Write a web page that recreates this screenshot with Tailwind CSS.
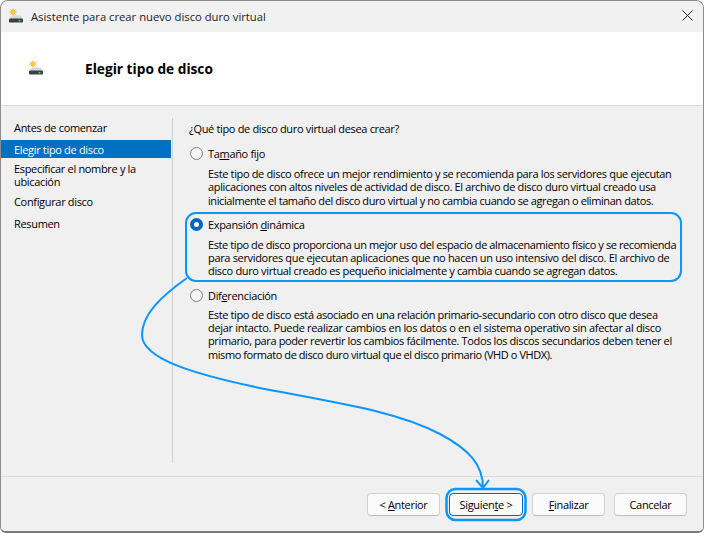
<!doctype html>
<html lang="es"><head><meta charset="utf-8"><script src="https://cdn.jsdelivr.net/npm/@tailwindcss/browser@4"></script></head>
<body class="m-0 bg-white">
<div class="relative w-[704px] h-[533px] overflow-hidden bg-white font-['Open_Sans','Liberation_Sans',sans-serif] text-[11px] tracking-[-0.33px] leading-[13px] text-black">
 <div class="flex flex-col h-full border border-[#8c8c8c] border-b-[2px] border-b-[#7a7a7a] rounded-t-[8px] rounded-b-[6px] overflow-hidden bg-[#f0f0f0]">
  <div class="h-[31px] shrink-0 flex items-center pl-[8px] pr-[10px] bg-[#f1f1f1]">
   <svg width="14" height="15" viewBox="0 0 14 15" class="shrink-0 -mt-[2px]"><g stroke="#f5a623" stroke-width="1"><path d="M4 .5v7M.5 4h7M1.500 1.500l5 5M6.500 1.500l-5 5"/></g><circle cx="4" cy="4" r="2" fill="#ffc83d"/><path d="M2.500 7.500h9l2 3.500H.5z" fill="#d5d8da"/><rect x="0" y="10.500" width="14" height="4" rx="1" fill="#3b3f44"/><rect x="9.500" y="12" width="2" height="1.500" fill="#3ddc5a"/></svg>
   <span class="ml-[8px] text-[11.25px] tracking-normal whitespace-nowrap text-[#222]">Asistente para crear nuevo disco duro virtual</span>
   <svg width="11" height="11" viewBox="0 0 11 11" class="ml-auto -mt-[2px]"><path d="M.5.5l10 10M10.500.5l-10 10" stroke="#222" stroke-width="1" fill="none"/></svg>
  </div>
  <div class="h-[74px] shrink-0 bg-white border-b border-b-[#d9d9d9] flex items-center pl-[28px]">
   <svg width="14" height="15" viewBox="0 0 14 15" class="shrink-0 -mt-[2px]"><g stroke="#f5a623" stroke-width="1"><path d="M4 .5v7M.5 4h7M1.500 1.500l5 5M6.500 1.500l-5 5"/></g><circle cx="4" cy="4" r="2" fill="#ffc83d"/><path d="M2.500 7.500h9l2 3.500H.5z" fill="#d5d8da"/><rect x="0" y="10.500" width="14" height="4" rx="1" fill="#3b3f44"/><rect x="9.500" y="12" width="2" height="1.500" fill="#3ddc5a"/></svg>
   <h1 class="ml-[42px] text-[13.7px] tracking-normal font-bold text-black whitespace-nowrap">Elegir tipo de disco</h1>
  </div>
  <div class="flex-1 flex bg-[#f0f0f0] border-b border-b-[#dcdcdc] pt-[12px] pb-[13px]">
   <nav class="w-[172px] shrink-0 border-r border-r-[#cfcfcf] pr-[1px]">
    <div class="h-[19px] pl-[13px] flex items-center">Antes de comenzar</div>
    <div class="h-[18px] mt-[3px] pl-[13px] flex items-center bg-[#0070c0] text-white">Elegir tipo de disco</div>
    <div class="mt-[4px] pl-[13px] leading-[13px]">Especificar el nombre y la<br>ubicación</div>
    <div class="mt-[6px] pl-[13px] h-[14px] flex items-center">Configurar disco</div>
    <div class="mt-[8px] pl-[13px] h-[14px] flex items-center">Resumen</div>
   </nav>
   <main class="flex-1 pl-[16px] pt-[4px]">
    <p class="whitespace-nowrap h-[15px]">¿Qué tipo de disco duro virtual desea crear?</p>
    <label class="mt-[9px] flex items-center h-[15px]"><span class="ml-[1px] w-[13px] h-[13px] rounded-full border border-[#7f7f7f] bg-[#f5f5f5] shrink-0"></span><span class="ml-[5px]">Ta<u>m</u>año fijo</span></label>
    <p class="mt-[6px] ml-[19px] whitespace-nowrap leading-[13.3px]"><span class="tracking-[-0.35px]">Este tipo de disco ofrece un mejor rendimiento y se recomienda para los servidores que ejecutan</span><br><span class="tracking-[-0.35px]">aplicaciones con altos niveles de actividad de disco. El archivo de disco duro virtual creado usa</span><br><span class="tracking-[-0.405px]">inicialmente el tamaño del disco duro virtual y no cambia cuando se agregan o eliminan datos.</span></p>
    <label class="mt-[10px] flex items-center h-[15px]"><span class="ml-[1px] w-[13px] h-[13px] rounded-full border-[4px] border-[#0067c0] bg-white shrink-0"></span><span class="ml-[5px]">Expansión <u>d</u>inámica</span></label>
    <p class="mt-[6px] ml-[19px] whitespace-nowrap leading-[13.3px]"><span class="tracking-[-0.41px]">Este tipo de disco proporciona un mejor uso del espacio de almacenamiento físico y se recomienda</span><br><span>para servidores que ejecutan aplicaciones que no hacen un uso intensivo del disco. El archivo de</span><br><span class="tracking-[-0.35px]">disco duro virtual creado es pequeño inicialmente y cambia cuando se agregan datos.</span></p>
    <label class="mt-[10px] flex items-center h-[15px]"><span class="ml-[1px] w-[13px] h-[13px] rounded-full border border-[#7f7f7f] bg-[#f5f5f5] shrink-0"></span><span class="ml-[5px]">Dif<u>e</u>renciación</span></label>
    <p class="mt-[5px] ml-[19px] whitespace-nowrap leading-[13.3px]"><span class="tracking-[-0.36px]">Este tipo de disco está asociado en una relación primario-secundario con otro disco que desea</span><br><span class="tracking-[-0.31px]">dejar intacto. Puede realizar cambios en los datos o en el sistema operativo sin afectar al disco</span><br><span class="tracking-[-0.37px]">primario, para poder revertir los cambios fácilmente. Todos los discos secundarios deben tener el</span><br><span class="tracking-[-0.43px]">mismo formato de disco duro virtual que el disco primario (VHD o VHDX).</span></p>
   </main>
  </div>
  <div class="h-[54px] shrink-0 flex justify-end items-start pt-[16px] pr-[16px] gap-[9px] bg-[#f0f0f0]">
   <button class="w-[73px] h-[23px] rounded-[4px] bg-[#fbfbfb] border border-[#d0d0d0] border-b-[#bdbdbd]">&lt; <u>A</u>nterior</button>
   <button class="w-[74px] h-[23px] rounded-[4px] bg-[#fbfbfb] border border-[#0067c0] ring-1 ring-inset ring-white">Siguien<u>t</u>e &gt;</button>
   <button class="w-[73px] h-[23px] rounded-[4px] bg-[#fbfbfb] border border-[#d0d0d0] border-b-[#bdbdbd]"><u>F</u>inalizar</button>
   <button class="w-[73px] h-[23px] rounded-[4px] bg-[#fbfbfb] border border-[#d0d0d0] border-b-[#bdbdbd]">Cancelar</button>
  </div>
 </div>
 <svg class="absolute inset-0 pointer-events-none" width="704" height="533" viewBox="0 0 704 533" fill="none" stroke="#0a96ff" stroke-width="2">
  <rect x="186" y="213" width="495" height="68" rx="10"/>
  <rect x="446.500" y="489" width="79" height="31" rx="9" stroke-width="2.500"/>
  <path d="M187 278C160 297 142 315 142 335C142 358 190 374 270 390C350 405 400 413 440 434C470 450 483 465 483 488"/>
  <path d="M476 480L483 488L489 480"/>
 </svg>
</div>
</body></html>
